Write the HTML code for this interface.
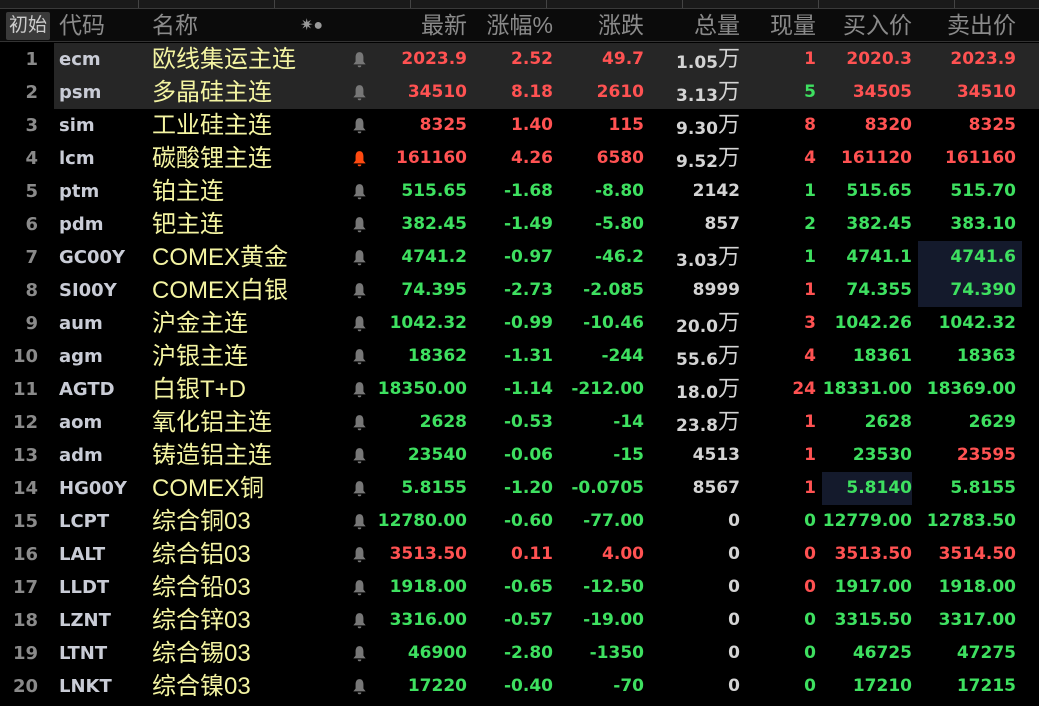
<!DOCTYPE html>
<html><head><meta charset="utf-8"><style>
*{margin:0;padding:0;box-sizing:border-box}
body{width:1039px;height:706px;background:#000;overflow:hidden;position:relative;font-family:"DejaVu Sans","Noto Sans CJK SC",sans-serif}
.tabs{position:absolute;left:0;top:0;width:1039px;height:9px;background:#1a1a1a;border-bottom:1px solid #3a3a3a}
.tabs i{position:absolute;top:0;width:1px;height:8px;background:#444}
.hdr{position:absolute;left:0;top:9px;width:1039px;height:33px;background:#0b0b0b;border-bottom:1px solid #333;color:#8a8a8a;font-size:23px;line-height:33px;font-family:"Liberation Sans","Noto Sans CJK SC",sans-serif}
.hdr span,.r span{position:absolute;white-space:nowrap}
.btn{left:6px;top:3px;width:44px;height:28px;background:#3a3a3a;border-radius:2px;color:#ccc;font-size:19px;line-height:28px;text-align:center}
.r{position:absolute;left:0;width:1039px;height:33px;line-height:33px;font-size:17px;font-weight:bold}
.r.h{background:linear-gradient(to right,#000 54px,#262626 54px)}
.n{left:0;width:38px;text-align:right;color:#8a8a8a;font-size:18px}
.c{left:59px;color:#c9ccd6;font-size:18px}
.nm{left:152px;color:#f4f4a2;font-weight:normal;font-size:24px;font-family:"Liberation Sans","Noto Sans CJK SC",sans-serif}
.b{position:absolute;left:352px;top:8px;width:15px;height:17px}
.v1{left:367px;width:100px;text-align:right}
.v2{left:473px;width:80px;text-align:right}
.v3{left:564px;width:80px;text-align:right}
.v4{left:650px;width:90px;text-align:right;color:#d4d4d4}
.v5{left:746px;width:70px;text-align:right}
.v6{left:822px;width:90px;text-align:right}
.v7{left:918px;width:98px;text-align:right}
.w{font-weight:normal;font-size:22px;font-family:"Noto Sans CJK SC",sans-serif;position:relative;top:-2px}
.R{color:#ff5252}.G{color:#3ee060}
.hl{background:#141a2c}
</style></head><body>
<div class="tabs"><i style="left:138px"></i><i style="left:274px"></i><i style="left:410px"></i><i style="left:546px"></i><i style="left:682px"></i><i style="left:818px"></i><i style="left:954px"></i></div>
<div class="hdr">
<span class="btn">初始</span>
<span style="left:59px">代码</span><span style="left:152px">名称</span>
<span style="left:300px;top:0px;font-size:16px;color:#999">✷●</span>
<span style="left:367px;width:100px;text-align:right">最新</span>
<span style="left:473px;width:80px;text-align:right">涨幅%</span>
<span style="left:564px;width:80px;text-align:right">涨跌</span>
<span style="left:650px;width:90px;text-align:right">总量</span>
<span style="left:746px;width:70px;text-align:right">现量</span>
<span style="left:822px;width:90px;text-align:right">买入价</span>
<span style="left:918px;width:98px;text-align:right">卖出价</span>
</div>
<svg width="0" height="0" style="position:absolute"><defs><symbol id="bell" viewBox="0 0 14 16"><path d="M7 1C4.4 1 3.3 3.2 3.3 6v4L1.2 12.6h11.6L10.7 10V6C10.7 3.2 9.6 1 7 1z M5.3 13.6h3.4a1.7 1.7 0 0 1-3.4 0z"/></symbol></defs></svg>

<div class="r h" style="top:43px"><span class="n">1</span><span class="c">ecm</span><span class="nm">欧线集运主连</span><svg class="b" viewBox="0 0 14 16" fill="#777"><use href="#bell" width="14" height="16"/></svg><span class="v1 R">2023.9</span><span class="v2 R">2.52</span><span class="v3 R">49.7</span><span class="v4">1.05<b class="w">万</b></span><span class="v5 R">1</span><span class="v6 R">2020.3</span><span class="v7 R">2023.9</span></div>
<div class="r h" style="top:76px"><span class="n">2</span><span class="c">psm</span><span class="nm">多晶硅主连</span><svg class="b" viewBox="0 0 14 16" fill="#777"><use href="#bell" width="14" height="16"/></svg><span class="v1 R">34510</span><span class="v2 R">8.18</span><span class="v3 R">2610</span><span class="v4">3.13<b class="w">万</b></span><span class="v5 G">5</span><span class="v6 R">34505</span><span class="v7 R">34510</span></div>
<div class="r" style="top:109px"><span class="n">3</span><span class="c">sim</span><span class="nm">工业硅主连</span><svg class="b" viewBox="0 0 14 16" fill="#777"><use href="#bell" width="14" height="16"/></svg><span class="v1 R">8325</span><span class="v2 R">1.40</span><span class="v3 R">115</span><span class="v4">9.30<b class="w">万</b></span><span class="v5 R">8</span><span class="v6 R">8320</span><span class="v7 R">8325</span></div>
<div class="r" style="top:142px"><span class="n">4</span><span class="c">lcm</span><span class="nm">碳酸锂主连</span><svg class="b" viewBox="0 0 14 16" fill="#ff4a10"><use href="#bell" width="14" height="16"/></svg><span class="v1 R">161160</span><span class="v2 R">4.26</span><span class="v3 R">6580</span><span class="v4">9.52<b class="w">万</b></span><span class="v5 R">4</span><span class="v6 R">161120</span><span class="v7 R">161160</span></div>
<div class="r" style="top:175px"><span class="n">5</span><span class="c">ptm</span><span class="nm">铂主连</span><svg class="b" viewBox="0 0 14 16" fill="#777"><use href="#bell" width="14" height="16"/></svg><span class="v1 G">515.65</span><span class="v2 G">-1.68</span><span class="v3 G">-8.80</span><span class="v4">2142</span><span class="v5 G">1</span><span class="v6 G">515.65</span><span class="v7 G">515.70</span></div>
<div class="r" style="top:208px"><span class="n">6</span><span class="c">pdm</span><span class="nm">钯主连</span><svg class="b" viewBox="0 0 14 16" fill="#777"><use href="#bell" width="14" height="16"/></svg><span class="v1 G">382.45</span><span class="v2 G">-1.49</span><span class="v3 G">-5.80</span><span class="v4">857</span><span class="v5 G">2</span><span class="v6 G">382.45</span><span class="v7 G">383.10</span></div>
<div class="r" style="top:241px"><span class="n">7</span><span class="c">GC00Y</span><span class="nm">COMEX黄金</span><svg class="b" viewBox="0 0 14 16" fill="#777"><use href="#bell" width="14" height="16"/></svg><span class="v1 G">4741.2</span><span class="v2 G">-0.97</span><span class="v3 G">-46.2</span><span class="v4">3.03<b class="w">万</b></span><span class="v5 G">1</span><span class="v6 G">4741.1</span><span class="v7 G hl" style="padding-right:6px;width:104px">4741.6</span></div>
<div class="r" style="top:274px"><span class="n">8</span><span class="c">SI00Y</span><span class="nm">COMEX白银</span><svg class="b" viewBox="0 0 14 16" fill="#777"><use href="#bell" width="14" height="16"/></svg><span class="v1 G">74.395</span><span class="v2 G">-2.73</span><span class="v3 G">-2.085</span><span class="v4">8999</span><span class="v5 R">1</span><span class="v6 G">74.355</span><span class="v7 G hl" style="padding-right:6px;width:104px">74.390</span></div>
<div class="r" style="top:307px"><span class="n">9</span><span class="c">aum</span><span class="nm">沪金主连</span><svg class="b" viewBox="0 0 14 16" fill="#777"><use href="#bell" width="14" height="16"/></svg><span class="v1 G">1042.32</span><span class="v2 G">-0.99</span><span class="v3 G">-10.46</span><span class="v4">20.0<b class="w">万</b></span><span class="v5 R">3</span><span class="v6 G">1042.26</span><span class="v7 G">1042.32</span></div>
<div class="r" style="top:340px"><span class="n">10</span><span class="c">agm</span><span class="nm">沪银主连</span><svg class="b" viewBox="0 0 14 16" fill="#777"><use href="#bell" width="14" height="16"/></svg><span class="v1 G">18362</span><span class="v2 G">-1.31</span><span class="v3 G">-244</span><span class="v4">55.6<b class="w">万</b></span><span class="v5 R">4</span><span class="v6 G">18361</span><span class="v7 G">18363</span></div>
<div class="r" style="top:373px"><span class="n">11</span><span class="c">AGTD</span><span class="nm">白银T+D</span><svg class="b" viewBox="0 0 14 16" fill="#777"><use href="#bell" width="14" height="16"/></svg><span class="v1 G">18350.00</span><span class="v2 G">-1.14</span><span class="v3 G">-212.00</span><span class="v4">18.0<b class="w">万</b></span><span class="v5 R">24</span><span class="v6 G">18331.00</span><span class="v7 G">18369.00</span></div>
<div class="r" style="top:406px"><span class="n">12</span><span class="c">aom</span><span class="nm">氧化铝主连</span><svg class="b" viewBox="0 0 14 16" fill="#777"><use href="#bell" width="14" height="16"/></svg><span class="v1 G">2628</span><span class="v2 G">-0.53</span><span class="v3 G">-14</span><span class="v4">23.8<b class="w">万</b></span><span class="v5 R">1</span><span class="v6 G">2628</span><span class="v7 G">2629</span></div>
<div class="r" style="top:439px"><span class="n">13</span><span class="c">adm</span><span class="nm">铸造铝主连</span><svg class="b" viewBox="0 0 14 16" fill="#777"><use href="#bell" width="14" height="16"/></svg><span class="v1 G">23540</span><span class="v2 G">-0.06</span><span class="v3 G">-15</span><span class="v4">4513</span><span class="v5 R">1</span><span class="v6 G">23530</span><span class="v7 R">23595</span></div>
<div class="r" style="top:472px"><span class="n">14</span><span class="c">HG00Y</span><span class="nm">COMEX铜</span><svg class="b" viewBox="0 0 14 16" fill="#777"><use href="#bell" width="14" height="16"/></svg><span class="v1 G">5.8155</span><span class="v2 G">-1.20</span><span class="v3 G">-0.0705</span><span class="v4">8567</span><span class="v5 R">1</span><span class="v6 G hl">5.8140</span><span class="v7 G">5.8155</span></div>
<div class="r" style="top:505px"><span class="n">15</span><span class="c">LCPT</span><span class="nm">综合铜03</span><svg class="b" viewBox="0 0 14 16" fill="#777"><use href="#bell" width="14" height="16"/></svg><span class="v1 G">12780.00</span><span class="v2 G">-0.60</span><span class="v3 G">-77.00</span><span class="v4">0</span><span class="v5 G">0</span><span class="v6 G">12779.00</span><span class="v7 G">12783.50</span></div>
<div class="r" style="top:538px"><span class="n">16</span><span class="c">LALT</span><span class="nm">综合铝03</span><svg class="b" viewBox="0 0 14 16" fill="#777"><use href="#bell" width="14" height="16"/></svg><span class="v1 R">3513.50</span><span class="v2 R">0.11</span><span class="v3 R">4.00</span><span class="v4">0</span><span class="v5 R">0</span><span class="v6 R">3513.50</span><span class="v7 R">3514.50</span></div>
<div class="r" style="top:571px"><span class="n">17</span><span class="c">LLDT</span><span class="nm">综合铅03</span><svg class="b" viewBox="0 0 14 16" fill="#777"><use href="#bell" width="14" height="16"/></svg><span class="v1 G">1918.00</span><span class="v2 G">-0.65</span><span class="v3 G">-12.50</span><span class="v4">0</span><span class="v5 R">0</span><span class="v6 G">1917.00</span><span class="v7 G">1918.00</span></div>
<div class="r" style="top:604px"><span class="n">18</span><span class="c">LZNT</span><span class="nm">综合锌03</span><svg class="b" viewBox="0 0 14 16" fill="#777"><use href="#bell" width="14" height="16"/></svg><span class="v1 G">3316.00</span><span class="v2 G">-0.57</span><span class="v3 G">-19.00</span><span class="v4">0</span><span class="v5 G">0</span><span class="v6 G">3315.50</span><span class="v7 G">3317.00</span></div>
<div class="r" style="top:637px"><span class="n">19</span><span class="c">LTNT</span><span class="nm">综合锡03</span><svg class="b" viewBox="0 0 14 16" fill="#777"><use href="#bell" width="14" height="16"/></svg><span class="v1 G">46900</span><span class="v2 G">-2.80</span><span class="v3 G">-1350</span><span class="v4">0</span><span class="v5 G">0</span><span class="v6 G">46725</span><span class="v7 G">47275</span></div>
<div class="r" style="top:670px"><span class="n">20</span><span class="c">LNKT</span><span class="nm">综合镍03</span><svg class="b" viewBox="0 0 14 16" fill="#777"><use href="#bell" width="14" height="16"/></svg><span class="v1 G">17220</span><span class="v2 G">-0.40</span><span class="v3 G">-70</span><span class="v4">0</span><span class="v5 G">0</span><span class="v6 G">17210</span><span class="v7 G">17215</span></div>
</body></html>
